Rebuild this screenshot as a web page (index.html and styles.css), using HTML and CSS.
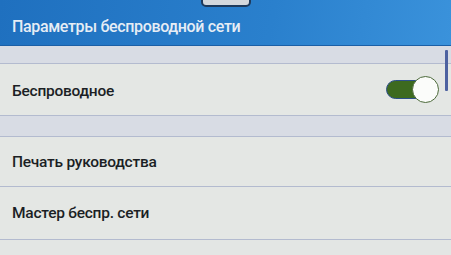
FILE: index.html
```html
<!DOCTYPE html>
<html lang="ru">
<head>
    <meta charset="UTF-8">
    <meta name="viewport" content="width=device-width, initial-scale=1.0">
    <title>Параметры беспроводной сети</title>
    <link rel="stylesheet" href="styles.css">
</head>
<body>
    <div class="screen">
        <header class="title-bar">
            <div class="pull-tab"></div>
            <h1>Параметры беспроводной сети</h1>
        </header>

        <div class="list">
            <div class="scrollbar"></div>
            <div class="gap gap-first"></div>
            <div class="row row-first">
                <span>Беспроводное</span>
                <div class="toggle on"><div class="knob"></div></div>
            </div>
            <div class="gap gap-second"></div>
            <div class="row row-print">
                <span>Печать руководства</span>
            </div>
            <div class="row row-wizard">
                <span>Мастер беспр. сети</span>
            </div>
            <div class="rest"></div>
        </div>
    </div>
</body>
</html>
```

FILE: styles.css
```css
/* экран принтера */
body {
    margin: 0;
    padding: 0;
    font-family: Roboto, 'Noto Sans', sans-serif;
    background: #e3e6e4;
}

.screen {
    width: 451px;
    height: 255px;
    overflow: hidden;
    display: flex;
    flex-direction: column;
}

.title-bar {
    position: relative;
    height: 45px;
    flex: none;
    background: linear-gradient(100deg, #1f70bf 0%, #2a80cd 60%, #3a92db 100%);
    border-bottom: 1px solid #1b5fa6;
    display: flex;
    align-items: center;
    padding-left: 12px;
}

.pull-tab {
    position: absolute;
    left: 201px;
    top: -3px;
    width: 46px;
    height: 6px;
    background: #d4d8dd;
    border: 2px solid #1e3a5c;
    border-radius: 0 0 5px 5px;
}

.title-bar h1 {
    margin: 8px 0 0;
    font-size: 16px;
    font-weight: 500;
    letter-spacing: -0.35px;
    color: #e6edf5;
}

.list {
    position: relative;
    flex: 1;
    display: flex;
    flex-direction: column;
}

.scrollbar {
    position: absolute;
    right: 3px;
    top: 4px;
    width: 3px;
    height: 41px;
    background: #4d62a0;
    border-radius: 1px;
}

.gap {
    background: #d8dce4;
    border-bottom: 1px solid #b3bbcf;
    flex: none;
}

.gap-first {
    height: 17px;
}

.gap-second {
    height: 20px;
    border-top: 1px solid #b3bbcf;
}

.row {
    display: flex;
    align-items: center;
    justify-content: space-between;
    padding: 0 12px;
    background: #e4e7e4;
    flex: none;
    font-size: 15.5px;
    font-weight: 500;
    letter-spacing: -0.25px;
    color: #1b1f24;
}

.row-first {
    height: 51px;
    padding-top: 2px;
    box-sizing: border-box;
}

.row-print {
    height: 49px;
    border-bottom: 1px solid #b3bbcf;
}

.row-wizard {
    height: 52px;
    border-bottom: 1px solid #b3bbcf;
}

.rest {
    flex: 1;
    background: #e3e6e4;
}

.toggle {
    position: relative;
    width: 53px;
    height: 27px;
    margin-top: -2px;
}

.toggle.on::before {
    content: '';
    position: absolute;
    left: 0;
    top: 4px;
    width: 44px;
    height: 19px;
    border-radius: 10px;
    background: #3d6a1f;
    border: 1px solid #2d4f8a;
    box-sizing: border-box;
}

.knob {
    position: absolute;
    right: 0;
    top: 0;
    width: 27px;
    height: 27px;
    box-sizing: border-box;
    border-radius: 50%;
    background: #fbfcfa;
    border: 1.5px solid #4c6a3a;
}
```
